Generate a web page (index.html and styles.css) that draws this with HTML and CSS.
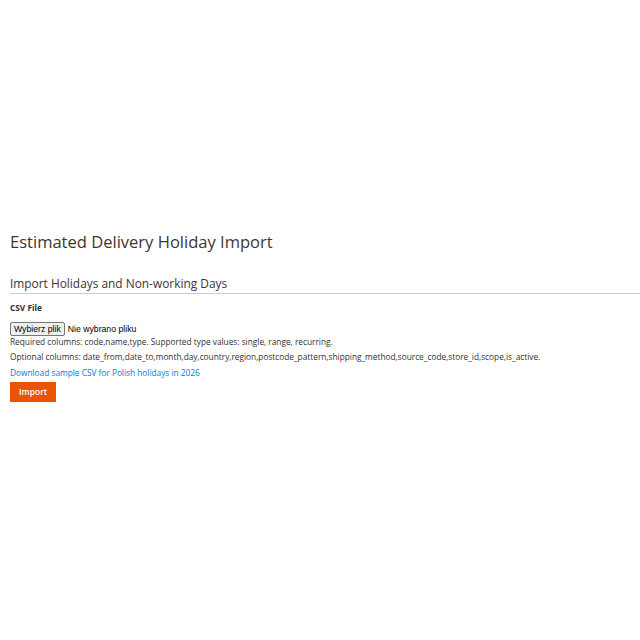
FILE: index.html
```html
<!DOCTYPE html>
<html lang="pl">
<head>
<meta charset="utf-8">
<title>Estimated Delivery Holiday Import</title>
<link rel="stylesheet" href="styles.css">
</head>
<body>
<main class="page">
  <h1 class="page-title">Estimated Delivery Holiday Import</h1>
  <section class="fieldset">
    <h2 class="legend">Import Holidays and Non-working Days</h2>
    <form class="import-form">
      <label class="field-label">CSV File</label>
      <div class="file-row">
        <span class="file-btn">Wybierz plik</span>
        <span class="file-name">Nie wybrano pliku</span>
      </div>
      <p class="note note-first">Required columns: code,name,type. Supported type values: single, range, recurring.</p>
      <p class="note">Optional columns: date_from,date_to,month,day,country,region,postcode_pattern,shipping_method,source_code,store_id,scope,is_active.</p>
      <a class="sample-link" href="#">Download sample CSV for Polish holidays in 2026</a>
      <div class="actions">
        <button type="button" class="btn-primary">Import</button>
      </div>
    </form>
  </section>
</main>
</body>
</html>
```
FILE: styles.css
```css
html, body {
  margin: 0;
  padding: 0;
  background: #ffffff;
}

body {
  font-family: "Open Sans", "Liberation Sans", sans-serif;
  color: #303030;
}

.page {
  padding-top: 230px;
  padding-left: 10px;
}

.page-title {
  margin: 0;
  font-size: 16.55px;
  font-weight: 400;
  line-height: 24px;
  color: #41362f;
}

.fieldset {
  margin-top: 21px;
}

.legend {
  margin: 0;
  font-size: 11.9px;
  font-weight: 400;
  line-height: 16px;
  color: #41362f;
  padding-bottom: 2px;
  border-bottom: 1px solid #cccccc;
}

.import-form {
  display: flex;
  flex-direction: column;
  align-items: flex-start;
  padding-top: 8px;
}

.field-label {
  font-size: 8.3px;
  font-weight: 700;
  line-height: 12px;
  color: #303030;
}

.file-row {
  display: flex;
  align-items: center;
  gap: 3px;
  margin-top: 8px;
  font-size: 8.5px;
  line-height: 12px;
}

.file-btn {
  display: inline-block;
  font-family: "Liberation Sans", Arial, sans-serif;
  font-size: 8.7px;
  line-height: 10px;
  padding: 1px 3px;
  background: #efefef;
  border: 1px solid #767676;
  border-radius: 2px;
  color: #000;
}

.file-name {
  font-family: "Liberation Sans", Arial, sans-serif;
  font-size: 8.7px;
  color: #000;
}

.note {
  margin: 0;
  font-size: 8.3px;
  line-height: 12px;
  color: #303030;
}

.note-first {
  margin-top: 0;
}

.note + .note {
  margin-top: 3px;
}

.sample-link {
  margin-top: 4px;
  font-size: 8.3px;
  line-height: 12px;
  color: #007bdb;
  text-decoration: none;
}

.actions {
  margin-top: 3px;
}

.btn-primary {
  display: block;
  font-family: "Open Sans", "Liberation Sans", sans-serif;
  font-size: 8.5px;
  font-weight: 600;
  line-height: 12px;
  color: #ffffff;
  background: #eb5202;
  border: 1px solid #eb5202;
  padding: 3px 8px;
  cursor: pointer;
  border-radius: 0;
}
```
